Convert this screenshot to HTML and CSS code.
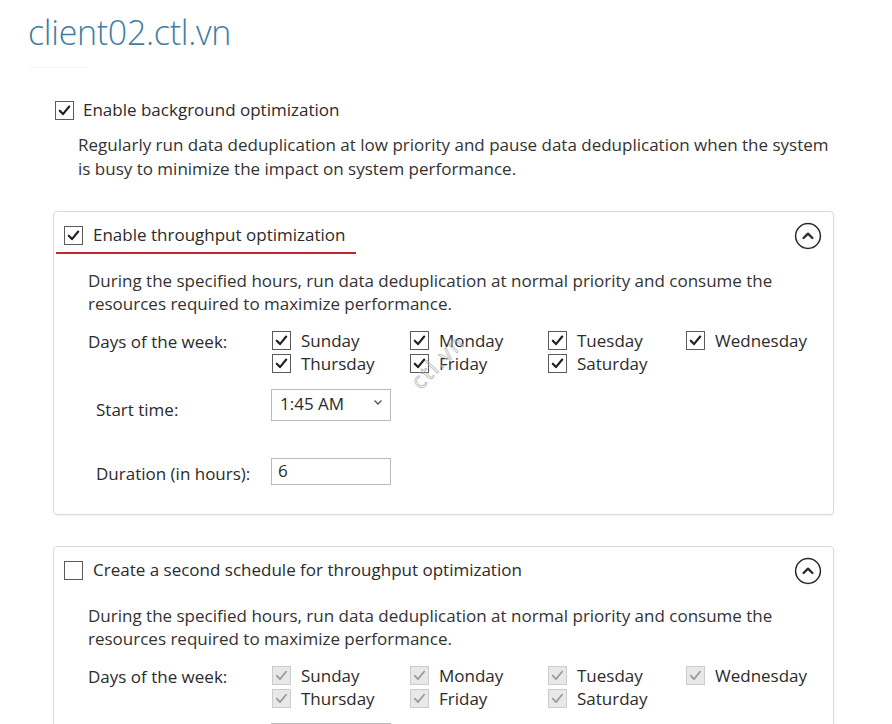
FILE: index.html
```html
<!DOCTYPE html>
<html lang="en">
<head>
<meta charset="utf-8">
<title>client02.ctl.vn</title>
<link rel="stylesheet" href="styles.css">
</head>
<body>
<div class="page">
  <h1 class="title">client02.ctl.vn</h1>
  <div class="title-rule"></div>

  <label class="check-row top-check">
    <span class="cb"><svg viewBox="0 0 18 18"><path d="M4 9.2 L7.4 12.8 L14 4.8"/></svg></span>
    <span>Enable background optimization</span>
  </label>
  <p class="top-desc">Regularly run data deduplication at low priority and pause data deduplication when the system is busy to minimize the impact on system performance.</p>

  <section class="card">
    <div class="card-head">
      <label class="check-row head-check marked">
        <span class="cb"><svg viewBox="0 0 18 18"><path d="M4 9.2 L7.4 12.8 L14 4.8"/></svg></span>
        <span>Enable throughput optimization</span>
      </label>
      <span class="collapse"><svg viewBox="0 0 28 28"><circle cx="14" cy="14" r="12.4"/><path d="M9.6 16 L14 11.6 L18.4 16"/></svg></span>
    </div>
    <div class="card-body">
      <p class="desc">During the specified hours, run data deduplication at normal priority and consume the resources required to maximize performance.</p>
      <div class="days">
        <span class="days-label">Days of the week:</span>
        <div class="days-grid">
          <label class="day"><span class="cb"><svg viewBox="0 0 18 18"><path d="M4 9.2 L7.4 12.8 L14 4.8"/></svg></span>Sunday</label>
          <label class="day"><span class="cb"><svg viewBox="0 0 18 18"><path d="M4 9.2 L7.4 12.8 L14 4.8"/></svg></span>Monday</label>
          <label class="day"><span class="cb"><svg viewBox="0 0 18 18"><path d="M4 9.2 L7.4 12.8 L14 4.8"/></svg></span>Tuesday</label>
          <label class="day"><span class="cb"><svg viewBox="0 0 18 18"><path d="M4 9.2 L7.4 12.8 L14 4.8"/></svg></span>Wednesday</label>
          <label class="day"><span class="cb"><svg viewBox="0 0 18 18"><path d="M4 9.2 L7.4 12.8 L14 4.8"/></svg></span>Thursday</label>
          <label class="day"><span class="cb"><svg viewBox="0 0 18 18"><path d="M4 9.2 L7.4 12.8 L14 4.8"/></svg></span>Friday</label>
          <label class="day"><span class="cb"><svg viewBox="0 0 18 18"><path d="M4 9.2 L7.4 12.8 L14 4.8"/></svg></span>Saturday</label>
        </div>
      </div>
      <div class="field start">
        <span class="field-label">Start time:</span>
        <div class="select"><span>1:45 AM</span><svg class="chev" viewBox="0 0 8 5"><path d="M0.5 0.5 L4 4 L7.5 0.5"/></svg></div>
      </div>
      <div class="field duration">
        <span class="field-label">Duration (in hours):</span>
        <div class="input">6</div>
      </div>
    </div>
    <span class="watermark">ctl.vn</span>
  </section>

  <section class="card">
    <div class="card-head">
      <label class="check-row head-check">
        <span class="cb"></span>
        <span>Create a second schedule for throughput optimization</span>
      </label>
      <span class="collapse"><svg viewBox="0 0 28 28"><circle cx="14" cy="14" r="12.4"/><path d="M9.6 16 L14 11.6 L18.4 16"/></svg></span>
    </div>
    <div class="card-body">
      <p class="desc">During the specified hours, run data deduplication at normal priority and consume the resources required to maximize performance.</p>
      <div class="days disabled">
        <span class="days-label">Days of the week:</span>
        <div class="days-grid">
          <label class="day"><span class="cb"><svg viewBox="0 0 18 18"><path d="M4 9.2 L7.4 12.8 L14 4.8"/></svg></span>Sunday</label>
          <label class="day"><span class="cb"><svg viewBox="0 0 18 18"><path d="M4 9.2 L7.4 12.8 L14 4.8"/></svg></span>Monday</label>
          <label class="day"><span class="cb"><svg viewBox="0 0 18 18"><path d="M4 9.2 L7.4 12.8 L14 4.8"/></svg></span>Tuesday</label>
          <label class="day"><span class="cb"><svg viewBox="0 0 18 18"><path d="M4 9.2 L7.4 12.8 L14 4.8"/></svg></span>Wednesday</label>
          <label class="day"><span class="cb"><svg viewBox="0 0 18 18"><path d="M4 9.2 L7.4 12.8 L14 4.8"/></svg></span>Thursday</label>
          <label class="day"><span class="cb"><svg viewBox="0 0 18 18"><path d="M4 9.2 L7.4 12.8 L14 4.8"/></svg></span>Friday</label>
          <label class="day"><span class="cb"><svg viewBox="0 0 18 18"><path d="M4 9.2 L7.4 12.8 L14 4.8"/></svg></span>Saturday</label>
        </div>
      </div>
      <div class="field start below-fold">
        <span class="field-label"></span>
        <div class="select"></div>
      </div>
    </div>
  </section>
</div>
</body>
</html>
```

FILE: styles.css
```css
* { box-sizing: border-box; }

html, body {
  margin: 0;
  padding: 0;
  background: #ffffff;
}

body {
  width: 892px;
  height: 724px;
  overflow: hidden;
  font-family: "Open Sans", "Noto Sans", "Liberation Sans", sans-serif;
  font-size: 17px;
  color: #2b2b2b;
}

.page {
  padding: 12px 0 0 28px;
}

.title {
  margin: 0;
  font-family: "Open Sans", "Noto Sans", sans-serif;
  font-weight: 300;
  font-size: 34px;
  line-height: 40px;
  color: #3d7ea3;
  letter-spacing: -0.3px;
}

.title-rule {
  width: 58px;
  height: 1px;
  margin: 15px 0 0 2px;
  background: #f4f4f4;
}

.check-row {
  display: flex;
  align-items: center;
  gap: 10px;
  line-height: 20px;
}

.cb {
  flex: none;
  width: 19px;
  height: 19px;
  border: 1px solid #5a5a5a;
  background: #ffffff;
  display: inline-flex;
  align-items: center;
  justify-content: center;
}

.cb svg {
  width: 17px;
  height: 17px;
  fill: none;
  stroke: #222;
  stroke-width: 2.3;
  stroke-linecap: round;
  stroke-linejoin: round;
}

.top-check {
  margin: 32px 0 0 27px;
  gap: 9px;
}

.top-desc {
  margin: 13px 0 0 50px;
  width: 760px;
  line-height: 24px;
  color: #333;
}

.card {
  position: relative;
  width: 781px;
  margin: 30px 0 0 25px;
  border: 1px solid #dadada;
  border-radius: 4px;
  box-shadow: 0 1px 2px rgba(0, 0, 0, 0.06);
}

.card + .card {
  margin-top: 31px;
}

.card-head {
  display: flex;
  align-items: center;
  justify-content: space-between;
  padding: 13px 11px 0 2px;
}

.head-check {
  padding: 0 0 7px 8px;
  border-bottom: 2px solid transparent;
}

.head-check.marked {
  border-bottom-color: #c4262e;
  padding-right: 11px;
}

.collapse {
  width: 28px;
  height: 28px;
  margin-top: -8px;
}

.collapse svg {
  width: 28px;
  height: 28px;
  fill: none;
  stroke: #2b2b2b;
}

.collapse circle { stroke-width: 1.5; }
.collapse path { stroke-width: 2.3; stroke-linecap: round; stroke-linejoin: round; }

.card-body {
  padding: 0 0 29px 34px;
}

.desc {
  margin: 15px 0 0 0;
  width: 700px;
  line-height: 23px;
  color: #333;
}

.days {
  display: flex;
  margin-top: 14px;
}

.days-label {
  width: 184px;
  line-height: 23px;
  padding-top: 1px;
}

.days-grid {
  display: grid;
  grid-template-columns: repeat(4, 138px);
}

.day {
  display: flex;
  align-items: center;
  gap: 10px;
  height: 23px;
}

.days.disabled .cb {
  background: #e8e8e8;
  border-color: #cccccc;
}

.days.disabled .cb svg {
  stroke: #9a9a9a;
  stroke-width: 1.8;
}

.field {
  display: flex;
  align-items: center;
}

.field-label {
  width: 183px;
  padding-left: 8px;
}

.start {
  margin-top: 14px;
}

.start .field-label {
  padding-top: 8px;
}

.select {
  width: 120px;
  height: 32px;
  border: 1px solid #b9b9b9;
  display: flex;
  align-items: center;
  justify-content: space-between;
  padding: 0 8px 3px 8px;
}

.chev {
  width: 8px;
  height: 5px;
  fill: none;
  stroke: #555;
  stroke-width: 1.3;
  margin-top: -2px;
}

.duration {
  margin-top: 36px;
}

.duration .field-label {
  padding-top: 5px;
}

.input {
  width: 120px;
  height: 27px;
  border: 1px solid #b9b9b9;
  padding: 0 6px;
  line-height: 24px;
}

.below-fold {
  margin-top: 13px;
}

.watermark {
  position: absolute;
  left: 368px;
  top: 158px;
  font-size: 22px;
  line-height: 22px;
  letter-spacing: 2px;
  color: transparent;
  -webkit-text-stroke: 0.7px #b0b0b0;
  transform: rotate(-46deg);
  transform-origin: left bottom;
  pointer-events: none;
}
```
